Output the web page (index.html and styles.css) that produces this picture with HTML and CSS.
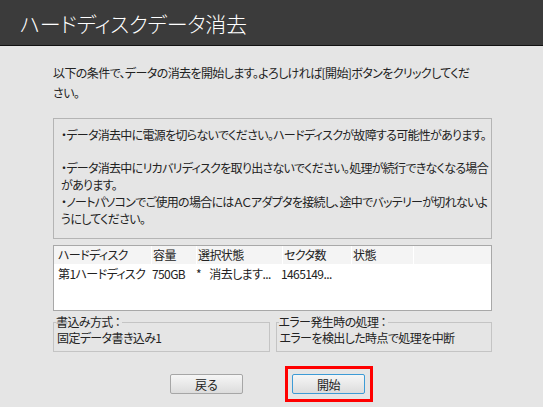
FILE: index.html
```html
<!DOCTYPE html>
<html lang="ja">
    <head>
        <meta charset="utf-8">
        <title>ハードディスクデータ消去</title>
        <link rel="stylesheet" href="styles.css">
    </head>
    <body>
        <header class="titlebar">
            <h1>ハードディスクデータ消去</h1>
        </header>
        <main class="content">
            <p class="intro">以下の条件で、データの消去を開始します。よろしければ[開始]ボタンをクリックしてください。</p>

            <div class="notice">
                <p>・データ消去中に電源を切らないでください。ハードディスクが故障する可能性があります。</p>
                <p class="gap">・データ消去中にリカバリディスクを取り出さないでください。処理が続行できなくなる場合があります。</p>
                <p>・ノートパソコンでご使用の場合にはＡＣアダプタを接続し、途中でバッテリーが切れないようにしてください。</p>
            </div>

            <div class="disklist">
                <div class="row head">
                    <span class="c1">ハードディスク</span>
                    <span class="c2">容量</span>
                    <span class="c3">選択状態</span>
                    <span class="c4">セクタ数</span>
                    <span class="c5">状態</span>
                </div>
                <div class="row">
                    <span class="c1">第1ハードディスク</span>
                    <span class="c2">750GB</span>
                    <span class="c3">*&nbsp;&nbsp;&nbsp;&nbsp;消去します...</span>
                    <span class="c4">1465149...</span>
                    <span class="c5"></span>
                </div>
            </div>

            <div class="options">
                <fieldset>
                    <legend>書込み方式 ：</legend>
                    <div class="value">固定データ書き込み1</div>
                </fieldset>
                <fieldset>
                    <legend>エラー発生時の処理 ：</legend>
                    <div class="value">エラーを検出した時点で処理を中断</div>
                </fieldset>
            </div>

            <div class="buttons">
                <button class="btn">戻る</button>
                <span class="mark"><button class="btn focus">開始</button></span>
            </div>
        </main>
    </body>
</html>
```

FILE: styles.css
```css
body {
    margin: 0;
    background: #e5e5e5;
    font-family: "Noto Sans CJK JP", "Noto Sans", sans-serif;
    font-size: 12px;
    font-feature-settings: "palt";
    letter-spacing: -0.6px;
    color: #222;
}

.titlebar {
    height: 45px;
    background: #3b3b3b;
    border-bottom: 1px solid #111;
    padding-left: 20px;
    display: flex;
    align-items: center;
}
.titlebar h1 {
    margin: 0;
    font-size: 21px;
    font-weight: 300;
    color: #fff;
    letter-spacing: -0.3px;
}

.content {
    width: 439px;
    margin: 0 0 0 53px;
}

.intro {
    margin: 17px 0 0 0;
    width: 420px;
    line-height: 20px;
}

.notice {
    margin-top: 15px;
    border: 1px solid #b4b4b4;
    padding: 7px 0 11px 7px;
    line-height: 17px;
    letter-spacing: -0.7px;
}
.notice p {
    margin: 0;
}
.notice .gap {
    margin-top: 16px;
}

.disklist {
    margin-top: 6px;
    height: 64px;
    background: #fff;
    border: 1px solid #a8a8a8;
}
.row {
    display: flex;
    height: 18px;
    line-height: 18px;
    padding-left: 3px;
}
.row.head {
    background: #f4f4f4;
    margin-bottom: 1px;
}
.row span { display: block; padding-left: 1px; }
.row.head span { border-right: 1px solid #fff; }
.c1 { width: 93px; }
.c2 { width: 43px; }
.c3 { width: 84px; }
.c4 { width: 67px; }
.c5 { width: 60px; }

.options {
    display: flex;
    gap: 6px;
    margin-top: 4px;
}
fieldset {
    flex: 1;
    margin: 0;
    padding: 0 3px 7px 3px;
    border: 1px solid #c4c4c4;
}
legend {
    padding: 0 2px 0 0;
    margin-left: -1px;
    line-height: 14px;
}
.value {
    margin-top: 3px;
    line-height: 12px;
}

.buttons {
    display: flex;
    align-items: center;
    gap: 42px;
    margin: 14px 0 0 117px;
}
.btn {
    width: 73px;
    height: 20px;
    padding: 0;
    font-family: inherit;
    font-size: 12px;
    letter-spacing: -0.6px;
    color: #222;
    border: 1px solid #a6a6a6;
    border-radius: 2px;
    background: linear-gradient(#f6f6f6, #dcdcdc);
}
.btn.focus {
    border-color: #3d9bd6;
}
.mark {
    display: block;
    border: 3px solid #f00;
    padding: 5px 5px 5px 4px;
}
```
